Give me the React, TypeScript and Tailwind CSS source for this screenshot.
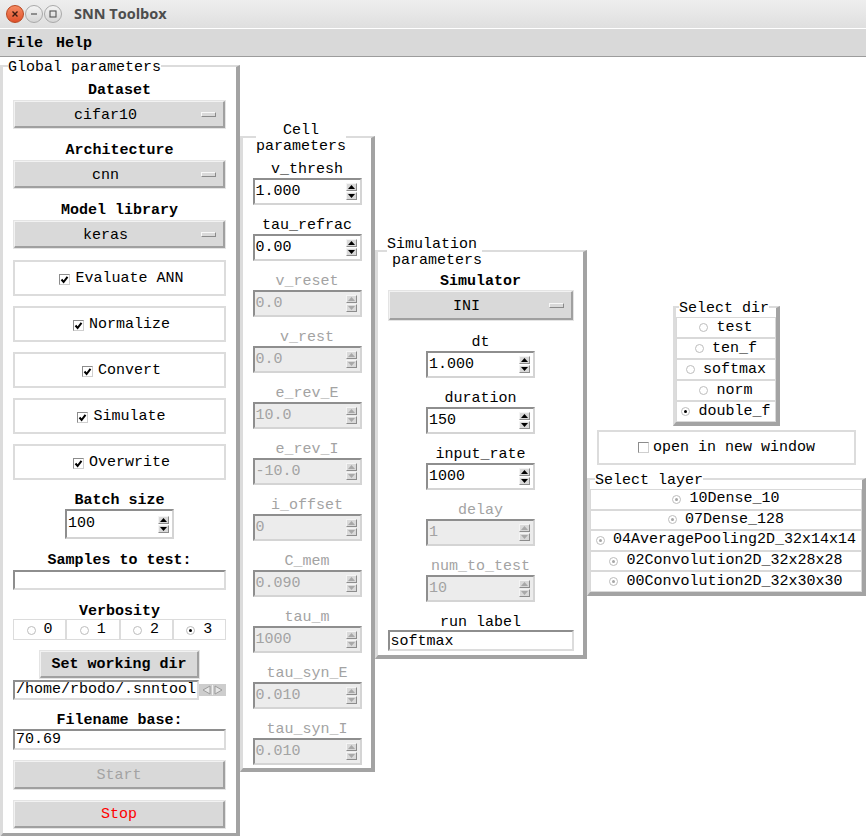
import React from 'react';

const LIGHT = 'border-[#dcdcdc]';

function Radio({ on, gray }: { on?: boolean; gray?: boolean }) {
  return (
    <span className="inline-flex items-center justify-center w-[9px] h-[9px] rounded-full border border-[#bdbdbd] bg-white shrink-0">
      {on ? (
        <span className={gray ? 'w-[3px] h-[3px] rounded-full bg-[#a6a6a6]' : 'w-[3px] h-[3px] rounded-full bg-black'} />
      ) : null}
    </span>
  );
}

function Check({ on }: { on?: boolean }) {
  return (
    <span className="inline-flex items-center justify-center w-[11px] h-[11px] border border-t-[#8c8c8c] border-l-[#8c8c8c] border-r-[#cfcfcf] border-b-[#cfcfcf] bg-white shrink-0">
      {on && (
        <svg width="9" height="9" viewBox="0 0 9 9">
          <path d="M1.5 4.5 3.6 7 7.5 1.8" fill="none" stroke="#000" strokeWidth="2" />
        </svg>
      )}
    </span>
  );
}

function Dropdown({ value, className }: { value: string; className: string }) {
  return (
    <div className={`border border-[#e4e4e4] ${className}`}>
      <div className="h-full flex items-center bg-[#d9d9d9] border-t border-l border-r-2 border-b-2 border-t-[#f2f2f2] border-l-[#f2f2f2] border-r-[#a0a0a0] border-b-[#a0a0a0]">
        <span className="flex-1 text-center pr-[5px] pt-[4px]">{value}</span>
        <span className="w-[15px] h-[5px] mr-[7px] bg-[#d9d9d9] border border-t-[#f8f8f8] border-l-[#f8f8f8] border-r-[#8a8a8a] border-b-[#8a8a8a]" />
      </div>
    </div>
  );
}

function Btn({ children, className }: { children: React.ReactNode; className: string }) {
  return (
    <div className={`border border-[#e4e4e4] ${className}`}>
      <div className="h-full flex items-center justify-center pt-[2px] bg-[#d9d9d9] border-t border-l border-r-2 border-b-2 border-t-[#f2f2f2] border-l-[#f2f2f2] border-r-[#a0a0a0] border-b-[#a0a0a0]">
        {children}
      </div>
    </div>
  );
}

function Arrow({ up, disabled }: { up?: boolean; disabled?: boolean }) {
  const fill = disabled ? '#a8a8a8' : '#000';
  return (
    <span className="flex items-center justify-center w-[11px] h-[8px] bg-[#d9d9d9] border border-t-[#f4f4f4] border-l-[#f4f4f4] border-r-[#8c8c8c] border-b-[#8c8c8c]">
      <svg width="7" height="4" viewBox="0 0 7 4">
        <path d={up ? 'M0 4 3.5 0 7 4Z' : 'M0 0 3.5 4 7 0Z'} fill={fill} />
      </svg>
    </span>
  );
}

function Spin({ value, disabled, className }: { value: string; disabled?: boolean; className: string }) {
  return (
    <div
      className={`flex items-center border-2 border-t-[#8e8e8e] border-l-[#8e8e8e] border-r-[#d4d4d4] border-b-[#d4d4d4] ${
        disabled ? 'bg-[#ececec] text-[#a3a3a3]' : 'bg-white text-black'
      } ${className}`}
    >
      <span className="flex-1 pl-[1px]">{value}</span>
      <span className="flex flex-col gap-[1px] mr-[3px]">
        <Arrow up disabled={disabled} />
        <Arrow disabled={disabled} />
      </span>
    </div>
  );
}

function Entry({ value, className }: { value: string; className: string }) {
  return (
    <div className={`flex items-center bg-white border-2 border-t-[#8e8e8e] border-l-[#8e8e8e] border-r-[#dcdcdc] border-b-[#dcdcdc] pl-[1px] ${className}`}>
      {value}
    </div>
  );
}

function CheckBox({ label }: { label: string }) {
  return (
    <div className={`h-[36px] border-2 ${LIGHT} flex items-center justify-center gap-[5px] pl-[4px] pt-[2px]`}>
      <Check on />
      <span>{label}</span>
    </div>
  );
}

function Param({ name, value, disabled, first }: { name: string; value: string; disabled?: boolean; first?: boolean }) {
  return (
    <div className={first ? 'mt-[7px] flex flex-col items-center' : 'mt-[11px] flex flex-col items-center'}>
      <div className={disabled ? 'h-[16px] leading-[19px] text-[#a3a3a3]' : 'h-[16px] leading-[19px]'}>{name}</div>
      <Spin value={value} disabled={disabled} className="mt-[2px] w-[109px] h-[27px]" />
    </div>
  );
}

const frame =
  'shrink-0 border-l-[3px] border-t-2 border-r-4 border-b-4 border-l-[#dcdcdc] border-t-[#dcdcdc] border-r-[#a3a3a3] border-b-[#a3a3a3]';

const label = 'h-[16px] leading-[20px] text-center font-bold';

function GlobalFrame() {
  return (
    <fieldset className={`${frame} w-[240px] mt-[1px]`}>
      <legend className="ml-[5px] h-[16px] leading-[20px]">Global parameters</legend>
      <div className="flex flex-col px-[10px] pb-[4px]">
        <div className={`mt-[7px] ${label}`}>Dataset</div>
        <Dropdown value="cifar10" className="mt-[3px] h-[29px]" />
        <div className={`mt-[12px] ${label}`}>Architecture</div>
        <Dropdown value="cnn" className="mt-[3px] h-[29px]" />
        <div className={`mt-[12px] ${label}`}>Model library</div>
        <Dropdown value="keras" className="mt-[3px] h-[29px]" />
        <div className="mt-[11px] flex flex-col gap-[10px]">
          <CheckBox label="Evaluate ANN" />
          <CheckBox label="Normalize" />
          <CheckBox label="Convert" />
          <CheckBox label="Simulate" />
          <CheckBox label="Overwrite" />
        </div>
        <div className={`mt-[11px] ${label}`}>Batch size</div>
        <Spin value="100" className="mt-[2px] self-center w-[109px] h-[30px]" />
        <div className={`mt-[12px] ${label}`}>Samples to test:</div>
        <Entry value="" className="mt-[3px] h-[20px]" />
        <div className={`mt-[12px] ${label}`}>Verbosity</div>
        <div className="mt-[1px] h-[21px] grid grid-cols-4">
          {['0', '1', '2', '3'].map((v) => (
            <div key={v} className={`border ${LIGHT} flex items-center justify-center gap-[8px] pt-[1px]`}>
              <Radio on={v === '3'} />
              <span>{v}</span>
            </div>
          ))}
        </div>
        <Btn className="mt-[10px] self-center w-[161px] h-[29px]">
          <span className="font-bold">Set working dir</span>
        </Btn>
        <div className="mt-[1px] flex items-center">
          <Entry value="/home/rbodo/.snntool" className="w-[186px] h-[20px]" />
          <div className="flex items-center h-[12px] bg-[#cdcdcd]">
            <svg width="27" height="12" viewBox="0 0 27 12">
              <path d="M11 2 4 6 11 10Z" fill="#e6e6e6" stroke="#9c9c9c" />
              <path d="M13.5 1v10" stroke="#f0f0f0" />
              <path d="M16 2 23 6 16 10Z" fill="#e6e6e6" stroke="#9c9c9c" />
            </svg>
          </div>
        </div>
        <div className={`mt-[11px] ${label}`}>Filename base:</div>
        <Entry value="70.69" className="mt-[2px] h-[21px]" />
        <Btn className="mt-[10px] h-[30px]">
          <span className="text-[#a3a3a3]">Start</span>
        </Btn>
        <Btn className="mt-[10px] h-[29px]">
          <span className="text-[#ff0000]">Stop</span>
        </Btn>
      </div>
    </fieldset>
  );
}

const cellParams: [string, string, boolean][] = [
  ['v_thresh', '1.000', false],
  ['tau_refrac', '0.00', false],
  ['v_reset', '0.0', true],
  ['v_rest', '0.0', true],
  ['e_rev_E', '10.0', true],
  ['e_rev_I', '-10.0', true],
  ['i_offset', '0', true],
  ['C_mem', '0.090', true],
  ['tau_m', '1000', true],
  ['tau_syn_E', '0.010', true],
  ['tau_syn_I', '0.010', true],
];

function CellFrame() {
  return (
    <fieldset className={`${frame} w-[135px] mt-[64px]`}>
      <legend className="ml-[13px]">
        <div className="flex flex-col items-center">
          <div className="h-[16px] leading-[20px]">Cell</div>
          <div className="h-[16px] leading-[20px]">parameters</div>
        </div>
      </legend>
      <div className="flex flex-col pb-[3px]">
        {cellParams.map(([n, v, d], i) => (
          <Param key={n} name={n} value={v} disabled={d} first={i === 0} />
        ))}
      </div>
    </fieldset>
  );
}

function SimFrame() {
  return (
    <fieldset className={`${frame} w-[212px] mt-[178px]`}>
      <legend className="ml-[9px]">
        <div className="h-[16px] leading-[20px]">Simulation</div>
        <div className="h-[16px] leading-[20px] pl-[5px]">parameters</div>
      </legend>
      <div className="flex flex-col items-center pb-[4px]">
        <div className="mt-[5px] h-[16px] leading-[19px] font-bold">Simulator</div>
        <Dropdown value="INI" className="mt-[2px] w-[186px] h-[31px]" />
        <div className="mt-[1px]" />
        <Param name="dt" value="1.000" />
        <Param name="duration" value="150" />
        <Param name="input_rate" value="1000" />
        <Param name="delay" value="1" disabled />
        <Param name="num_to_test" value="10" disabled />
        <div className="mt-[11px] h-[16px] leading-[19px]">run label</div>
        <Entry value="softmax" className="mt-[1px] w-[186px] h-[21px] pt-[2px]" />
      </div>
    </fieldset>
  );
}

function RightColumn() {
  const dirs = ['test', 'ten_f', 'softmax', 'norm', 'double_f'];
  const layers = [
    '10Dense_10',
    '07Dense_128',
    '04AveragePooling2D_32x14x14',
    '02Convolution2D_32x28x28',
    '00Convolution2D_32x30x30',
  ];
  return (
    <div className="shrink-0 w-[279px] mt-[242px] flex flex-col items-center">
      <fieldset className={`${frame} w-[107px]`}>
        <legend className="ml-[3px] h-[16px] leading-[19px]">Select dir</legend>
        <div className="mt-[2px] flex flex-col">
          {dirs.map((d) => (
            <div key={d} className="h-[21px] border border-[#d9d9d9] flex items-center justify-center gap-[8px]">
              <Radio on={d === 'double_f'} />
              <span>{d}</span>
            </div>
          ))}
        </div>
      </fieldset>
      <div className={`mt-[4px] w-[259px] h-[35px] border-2 ${LIGHT} flex items-center justify-center gap-[4px]`}>
        <Check />
        <span>open in new window</span>
      </div>
      <fieldset className={`${frame} w-[279px] mt-[6px]`}>
        <legend className="ml-[5px] h-[16px] leading-[19px]">Select layer</legend>
        <div className="mt-[2px] flex flex-col">
          {layers.map((l) => (
            <div key={l} className="h-[20.6px] border border-[#d9d9d9] flex items-center justify-center gap-[8px]">
              <Radio on gray />
              <span>{l}</span>
            </div>
          ))}
        </div>
      </fieldset>
    </div>
  );
}

function TitleBar() {
  return (
    <div className="h-[29px] flex items-center bg-linear-to-b from-[#eeeeee] to-[#dfdfdf] border-b border-white font-['Open_Sans',sans-serif]">
      <div className="ml-[6px] flex items-center gap-[1px]">
        <span className="w-[18px] h-[18px] rounded-full bg-linear-to-b from-[#f58a62] to-[#e0502a] border border-[#b9461f] flex items-center justify-center">
          <svg width="8" height="8" viewBox="0 0 8 8">
            <path d="M1.5 1.5 6.5 6.5M6.5 1.5 1.5 6.5" stroke="#3b1a10" strokeWidth="1.4" />
          </svg>
        </span>
        <span className="w-[18px] h-[18px] rounded-full bg-linear-to-b from-[#f4f4f4] to-[#d6d6d6] border border-[#a9a9a9] flex items-center justify-center">
          <svg width="8" height="8" viewBox="0 0 8 8">
            <path d="M1 4h6" stroke="#555" strokeWidth="1.2" />
          </svg>
        </span>
        <span className="w-[18px] h-[18px] rounded-full bg-linear-to-b from-[#f4f4f4] to-[#d6d6d6] border border-[#a9a9a9] flex items-center justify-center">
          <svg width="8" height="8" viewBox="0 0 8 8">
            <rect x="1" y="1" width="6" height="6" fill="none" stroke="#555" strokeWidth="1.1" />
          </svg>
        </span>
      </div>
      <span className="ml-[12px] text-[14.5px] font-bold text-[#4d4d4d]">SNN Toolbox</span>
    </div>
  );
}

export default function App() {
  return (
    <div className="w-[866px] h-[836px] overflow-hidden bg-white font-['Liberation_Mono',monospace] text-[15px] leading-[16px] text-black">
      <TitleBar />
      <div className="h-[28px] bg-[#d9d9d9] border-b border-[#9c9c9c] flex items-center font-bold pt-[2px]">
        <span className="ml-[7px]">File</span>
        <span className="ml-[13px]">Help</span>
      </div>
      <div className="flex items-start">
        <GlobalFrame />
        <CellFrame />
        <SimFrame />
        <RightColumn />
      </div>
    </div>
  );
}
